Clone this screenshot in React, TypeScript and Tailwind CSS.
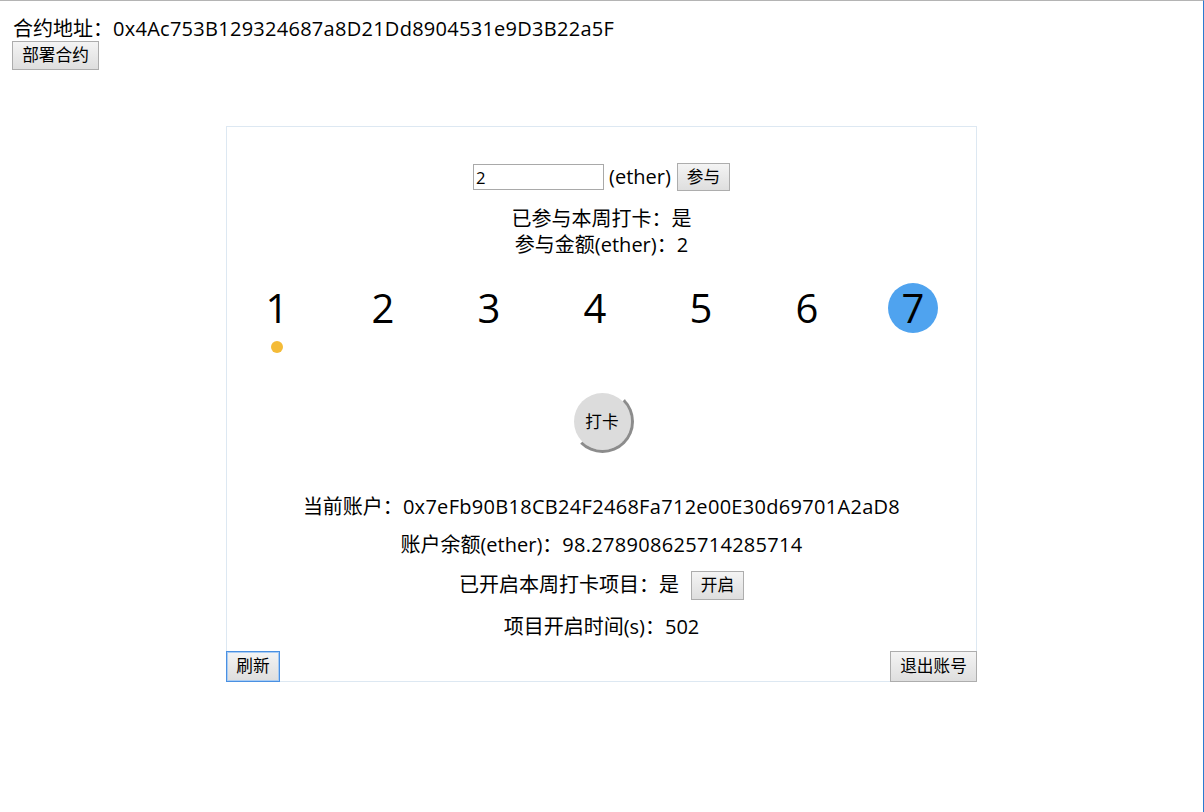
import React from "react";

const btnBase =
  "border bg-gradient-to-b from-[#f4f4f4] to-[#dedede] text-[16.67px] leading-none text-black";
const btn = `${btnBase} border-[#adadad]`;

export default function App() {
  const days = [1, 2, 3, 4, 5, 6, 7];
  return (
    <div
      className="h-[812px] w-[1204px] border-t border-t-[#b4b4b4] border-r border-r-[#2b7bd0] bg-white text-black"
      style={{ fontFamily: '"Open Sans", "Noto Sans CJK SC", sans-serif' }}
    >
      <div className="pl-[13px] pt-[15px]">
        <div className="h-[25px] text-[20px] leading-[25px]">
          合约地址：<span className="tracking-[0.27px]">0x4Ac753B129324687a8D21Dd8904531e9D3B22a5F</span>
        </div>
        <button className={`${btn} h-[29px] w-[87px] -ml-[1px]`}>部署合约</button>
      </div>

      <div className="mx-auto mt-[56px] flex h-[556px] w-[751px] flex-col items-center border border-[#dde8f2] text-[20px]">
        <div className="mt-[35px] flex h-[30px] items-center">
          <input
            defaultValue="2"
            className="h-[26px] w-[131px] border border-[#a9a9a9] px-[2px] text-[16.67px] outline-none"
          />
          <span className="ml-[5px] text-[20px] leading-none">(ether)</span>
          <button className={`${btn} ml-[6px] h-[28px] w-[53px]`}>参与</button>
        </div>
        <div className="mt-[14px] h-[26px] leading-[26px]">已参与本周打卡：是</div>
        <div className="h-[26px] leading-[26px]">参与金额(ether)：2</div>

        <div className="mt-[25px] flex w-full gap-[56px] pl-[25px]">
          {days.map((d) => (
            <div key={d} className="flex w-[50px] flex-col items-center">
              <div
                className={`flex h-[50px] w-[50px] items-center justify-center rounded-full text-[40px] leading-none ${
                  d === 7 ? "bg-[#4fa3ef]" : ""
                }`}
              >
                {d}
              </div>
              {d === 1 && <div className="mt-[8px] h-[12px] w-[12px] rounded-full bg-[#f4bb38]" />}
            </div>
          ))}
        </div>

        <button className="mt-[37px] ml-[1px] flex h-[63px] w-[63px] items-center justify-center rounded-full border-[3px] border-transparent border-r-[#8c8c8c] border-b-[#8c8c8c] bg-[#dcdcdc] bg-clip-padding text-[16.67px]">
          打卡
        </button>

        <div className="mt-[41px] h-[26px] leading-[26px]">
          当前账户：<span className="tracking-[0.3px]">0x7eFb90B18CB24F2468Fa712e00E30d69701A2aD8</span>
        </div>
        <div className="mt-[12px] h-[26px] leading-[26px]">
          账户余额(ether)：<span className="tracking-[0.3px]">98.278908625714285714</span>
        </div>
        <div className="mt-[12px] flex h-[30px] items-center">
          <span>已开启本周打卡项目：是</span>
          <button className={`${btn} ml-[12px] h-[29px] w-[53px]`}>开启</button>
        </div>
        <div className="mt-[14px] h-[26px] leading-[26px]">项目开启时间(s)：502</div>

        <div className="mt-auto -mx-[1px] -mb-[1px] flex w-[calc(100%+2px)] justify-between self-stretch">
          <button className={`${btnBase} h-[31px] w-[54px] border-[#4a90e2] ring-1 ring-inset ring-[#a9ccf3]`}>刷新</button>
          <button className={`${btn} h-[31px] w-[87px]`}>退出账号</button>
        </div>
      </div>
    </div>
  );
}
